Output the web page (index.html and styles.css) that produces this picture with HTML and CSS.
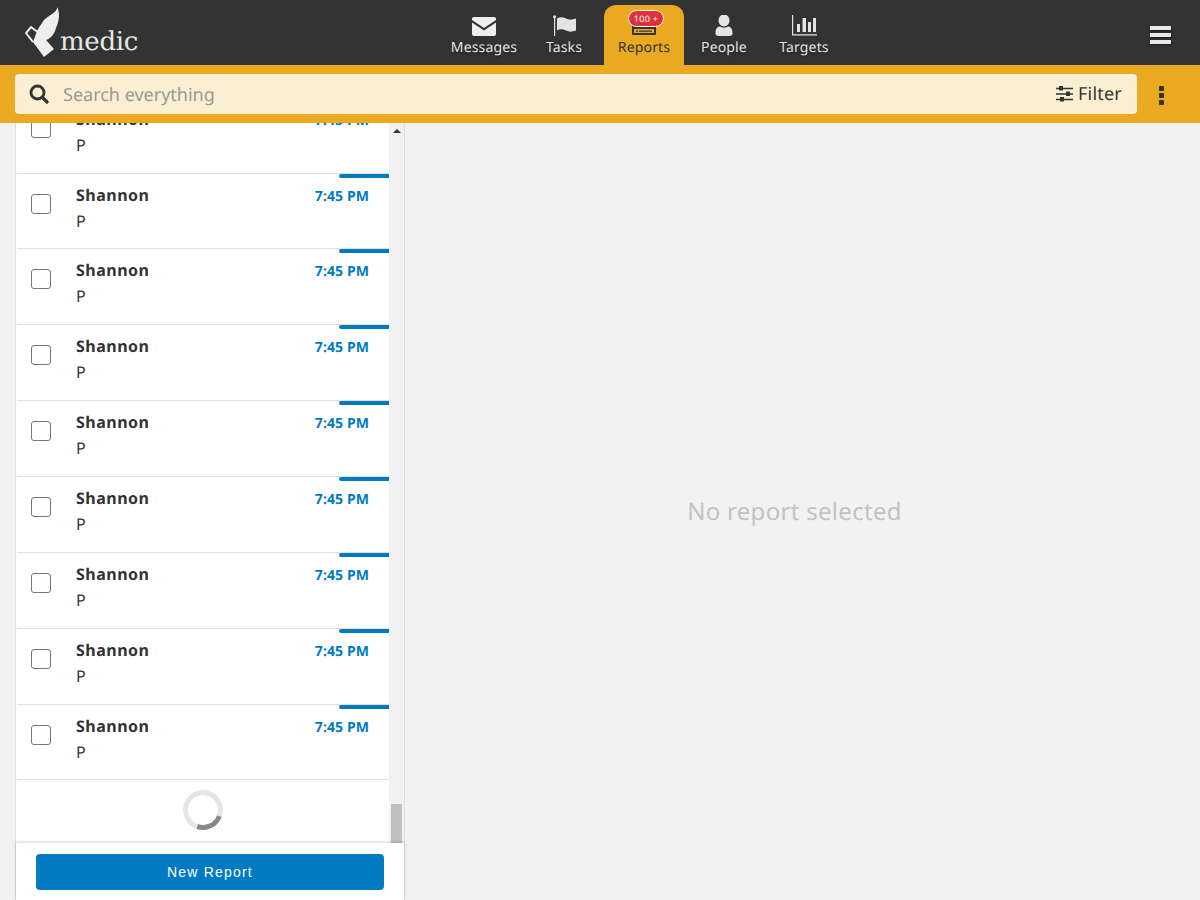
FILE: index.html
```html
<!DOCTYPE html>
<html lang="en">
<head>
<meta charset="utf-8">
<title>Reports</title>
<link rel="stylesheet" href="styles.css">
</head>
<body>
<header class="topbar">
  <a class="logo">
    <svg class="logo-mark" width="35" height="52" viewBox="0 0 35 52"><path fill="#eee" d="M12 25C14 21 17 17 19 14C21 12 24 10 27 8C30 6 32 4 32.500 1C34 6 34.500 10 33.500 14C33 17 32 20 31 22C30 26 28 29 26 31C24 33 22 34 21 34L29 43L19 51L8 36z"/><path fill="none" stroke="#eee" stroke-width="2" d="M14 27L6 21L1 27L8 36"/></svg>
    <span class="logo-text">medic</span>
  </a>
  <nav class="tabs">
    <a class="tab">
      <svg class="tab-icon" width="26" height="22" viewBox="0 0 26 22"><path fill="#eee" d="M3 2h20a2 2 0 0 1 2 2v1L13 13 1 5V4a2 2 0 0 1 2-2z"/><path fill="#eee" d="M1 7.500l12 8 12-8V19a2 2 0 0 1-2 2H3a2 2 0 0 1-2-2z"/></svg>
      <span>Messages</span>
    </a>
    <a class="tab">
      <svg class="tab-icon" width="26" height="22" viewBox="0 0 26 22"><path fill="#e4e4e4" d="M3 2h1.200v19H3z"/><circle cx="3.600" cy="1.700" r="1.500" fill="#e4e4e4"/><path fill="#e4e4e4" d="M6 3.500c3-2 6-1.500 9 0s6 1.500 10 0v12c-4 1.500-7 1.500-10 0s-6-2-9 0z"/></svg>
      <span>Tasks</span>
    </a>
    <a class="tab tab-active">
      <svg class="tab-icon" width="26" height="22" viewBox="0 0 26 22"><path fill="#333" d="M2 10h22a1 1 0 0 1 1 1v8a1 1 0 0 1-1 1H2a1 1 0 0 1-1-1v-8a1 1 0 0 1 1-1z"/><path fill="#e9aa22" d="M3 14h20v4H3z"/><path fill="#333" d="M5 15.500h2v1.200H5zM8 15.500h13v1.200H8z"/></svg>
      <span>Reports</span>
      <b class="badge">100 +</b>
    </a>
    <a class="tab">
      <svg class="tab-icon" width="26" height="22" viewBox="0 0 26 22"><ellipse cx="13" cy="5.500" rx="5.500" ry="6" fill="#e4e4e4"/><path fill="#e4e4e4" d="M9 11.500c2 1.500 6 1.500 8 0 3 0 4.500 3 4.500 6v1.500c0 1-1.500 2-3.500 2H8c-2 0-3.500-1-3.500-2v-1.500c0-3 1.500-6 4.500-6z"/></svg>
      <span>People</span>
    </a>
    <a class="tab">
      <svg class="tab-icon" width="26" height="22" viewBox="0 0 26 22"><path fill="#e4e4e4" d="M1 0h1.200v19.300H26v1.200H1z"/><path fill="#e4e4e4" d="M6 9h3v8H6zM11.500 3H15v14h-3.500zM17 7h3v10h-3zM22 3h3v14h-3z"/></svg>
      <span>Targets</span>
    </a>
  </nav>
  <button class="menu-btn" aria-label="Menu"><i></i><i></i><i></i></button>
</header>
<div class="toolbar">
  <div class="search">
    <svg class="search-icon" width="20" height="20" viewBox="0 0 20 20"><circle cx="8.500" cy="8.500" r="6.500" fill="none" stroke="#333" stroke-width="2.800"/><path stroke="#333" stroke-width="3.200" stroke-linecap="round" d="M13.500 13.500l4.500 4.500"/></svg>
    <span class="search-text">Search everything</span>
    <span class="filter">
      <svg width="17" height="16" viewBox="0 0 17 16"><path stroke="#333" stroke-width="1.500" d="M0 2.500h17M0 8h17M0 13.500h17"/><path fill="#333" d="M3 0h4v4.500H3zM10 5.500h4V10h-4zM4 11h4v4.500H4z"/></svg>
      Filter
    </span>
  </div>
  <button class="more" aria-label="More"><i></i><i></i><i></i></button>
</div>
<main class="content">
  <section class="left">
    <div class="scroller">
      <div class="list">
        <ul class="rows">
          <li class="row row-first"><span class="check"></span><div class="row-body"><div class="row-top"><strong>Shannon</strong><em>7:45 PM</em></div><p>P</p></div></li>
          <li class="row row-short"><span class="check"></span><div class="row-body"><div class="row-top"><strong>Shannon</strong><em>7:45 PM</em></div><p>P</p></div></li>
          <li class="row"><span class="check"></span><div class="row-body"><div class="row-top"><strong>Shannon</strong><em>7:45 PM</em></div><p>P</p></div></li>
          <li class="row"><span class="check"></span><div class="row-body"><div class="row-top"><strong>Shannon</strong><em>7:45 PM</em></div><p>P</p></div></li>
          <li class="row"><span class="check"></span><div class="row-body"><div class="row-top"><strong>Shannon</strong><em>7:45 PM</em></div><p>P</p></div></li>
          <li class="row"><span class="check"></span><div class="row-body"><div class="row-top"><strong>Shannon</strong><em>7:45 PM</em></div><p>P</p></div></li>
          <li class="row"><span class="check"></span><div class="row-body"><div class="row-top"><strong>Shannon</strong><em>7:45 PM</em></div><p>P</p></div></li>
          <li class="row"><span class="check"></span><div class="row-body"><div class="row-top"><strong>Shannon</strong><em>7:45 PM</em></div><p>P</p></div></li>
          <li class="row row-short"><span class="check"></span><div class="row-body"><div class="row-top"><strong>Shannon</strong><em>7:45 PM</em></div><p>P</p></div></li>
        </ul>
        <div class="loader"><span class="spinner"></span></div>
      </div>
      <div class="scrollbar"><span class="arrow"></span><span class="thumb"></span></div>
    </div>
    <div class="actions"><button class="new-report">New Report</button></div>
  </section>
  <section class="empty">No report selected</section>
</main>
</body>
</html>
```
FILE: styles.css
```css
* { box-sizing: border-box; }
html, body { height: 100%; }
body { margin: 0; height: 900px; overflow: hidden; background: #f2f2f2; color: #333; font-family: "Noto Sans", sans-serif; display: flex; flex-direction: column; text-rendering: geometricPrecision; }
button { border: 0; background: none; padding: 0; font: inherit; }

.topbar { height: 65px; flex: none; background: #333; display: flex; align-items: stretch; position: relative; padding-left: 25px; }
.logo { display: flex; align-items: flex-end; width: 419px; height: 58px; }
.logo-mark { flex: none; }
.logo-text { font-family: "DejaVu Serif", serif; font-size: 26px; line-height: 32px; color: #e8e8e8; font-weight: 400; letter-spacing: -0.3px; }
.tabs { display: flex; align-items: stretch; }
.tab { width: 80px; display: flex; flex-direction: column; align-items: center; padding-top: 15px; color: #e4e4e4; font-size: 14px; line-height: 20px; position: relative; text-shadow: 0 1px 2px rgba(0,0,0,.5); }
.tab-icon { display: block; height: 22px; flex: none; margin-bottom: 1px; }
.tab span { white-space: nowrap; letter-spacing: .15px; }
.tab-active { background: #e9aa22; color: #333; border-radius: 12px 12px 0 0; margin-top: 5px; padding-top: 10px; text-shadow: none; }
.badge { position: absolute; top: 5px; left: 24px; width: 36px; height: 17px; border-radius: 9px; background: #e0303a; border: 1px solid #fff; color: #fff; font-size: 9px; line-height: 15px; font-weight: 400; text-align: center; letter-spacing: .3px; }
.menu-btn { position: absolute; right: 29px; top: 26px; width: 21px; display: flex; flex-direction: column; gap: 3px; }
.menu-btn i { display: block; height: 4px; background: #e8e8e8; box-shadow: 1px 1px 2px rgba(0,0,0,.5); }

.toolbar { height: 58px; flex: none; background: #e9aa22; display: flex; align-items: flex-start; padding: 9px 0 0 15px; }
.search { width: 1122px; height: 40px; background: #fbefd3; border-radius: 4px; display: flex; align-items: center; padding: 0 15px 0 14px; font-size: 18px; }
.search-icon { flex: none; margin-right: 14px; }
.search-text { color: #999; flex: 1; padding-top: 2px; }
.filter { display: flex; align-items: center; gap: 5px; color: #333; letter-spacing: .2px; }
.more { margin: 12px 0 0 22px; width: 5px; display: flex; flex-direction: column; gap: 2px; }
.more i { display: block; height: 5px; background: #333; border-radius: 1px; }

.content { flex: 1; display: flex; min-height: 0; }
.left { width: 390px; margin-left: 15px; flex: none; background: #fff; border: 1px solid #dedede; border-width: 0 1px; display: flex; flex-direction: column; }
.scroller { height: 720px; flex: none; display: flex; overflow: hidden; }
.list { flex: 1; min-width: 0; overflow: hidden; }
.rows { list-style: none; margin: -25px 0 0; padding: 0; }
.row { height: 76px; border-bottom: 1px solid #e0e0e0; margin-left: 1px; display: flex; position: relative; padding: 9px 20px 0 14px; }
.row-short { height: 75px; }
.row:not(.row-first)::before { content: ""; position: absolute; top: 0; right: 0; width: 50px; height: 4px; background: #007bc2; border-radius: 2px 0 0 2px; }
.check { flex: none; width: 20px; height: 20px; border: 1px solid #777; border-radius: 3px; background: #fff; margin-top: 11px; }
.row-body { flex: 1; margin-left: 25px; }
.row-top { display: flex; justify-content: space-between; align-items: baseline; line-height: 24px; }
.row-top strong { font-size: 16px; font-weight: 700; letter-spacing: .5px; }
.row-top em { font-size: 14px; font-weight: 700; font-style: normal; color: #007bc2; letter-spacing: .1px; }
.row-body p { margin: 0; font-size: 16px; line-height: 24px; }
.loader { display: flex; justify-content: center; padding-top: 10px; }
.spinner { width: 40px; height: 40px; border-radius: 50%; border: 5px solid #e5e5e5; border-bottom-color: #888; transform: rotate(-25deg); }
.scrollbar { width: 15px; flex: none; background: #f1f1f1; display: flex; flex-direction: column; justify-content: space-between; align-items: center; }
.arrow { margin-top: 6px; width: 0; height: 0; border: 4px solid transparent; border-top: 0; border-bottom: 4px solid #333; }
.thumb { width: 11px; height: 39px; background: #c0c0c0; }
.actions { flex: 1; padding: 11px 19px 0 20px; background: #fff; position: relative; box-shadow: 0 -1px 3px rgba(0,0,0,.18); }
.new-report { width: 348px; height: 36px; background: #007bc2; color: #fff; border-radius: 4px; font-family: "Liberation Sans", sans-serif; font-size: 14px; letter-spacing: 1.2px; }

.empty { flex: 1; display: flex; align-items: center; justify-content: center; padding-right: 16px; padding-bottom: 1px; font-size: 24px; letter-spacing: .3px; color: #c2c2c2; }
```
